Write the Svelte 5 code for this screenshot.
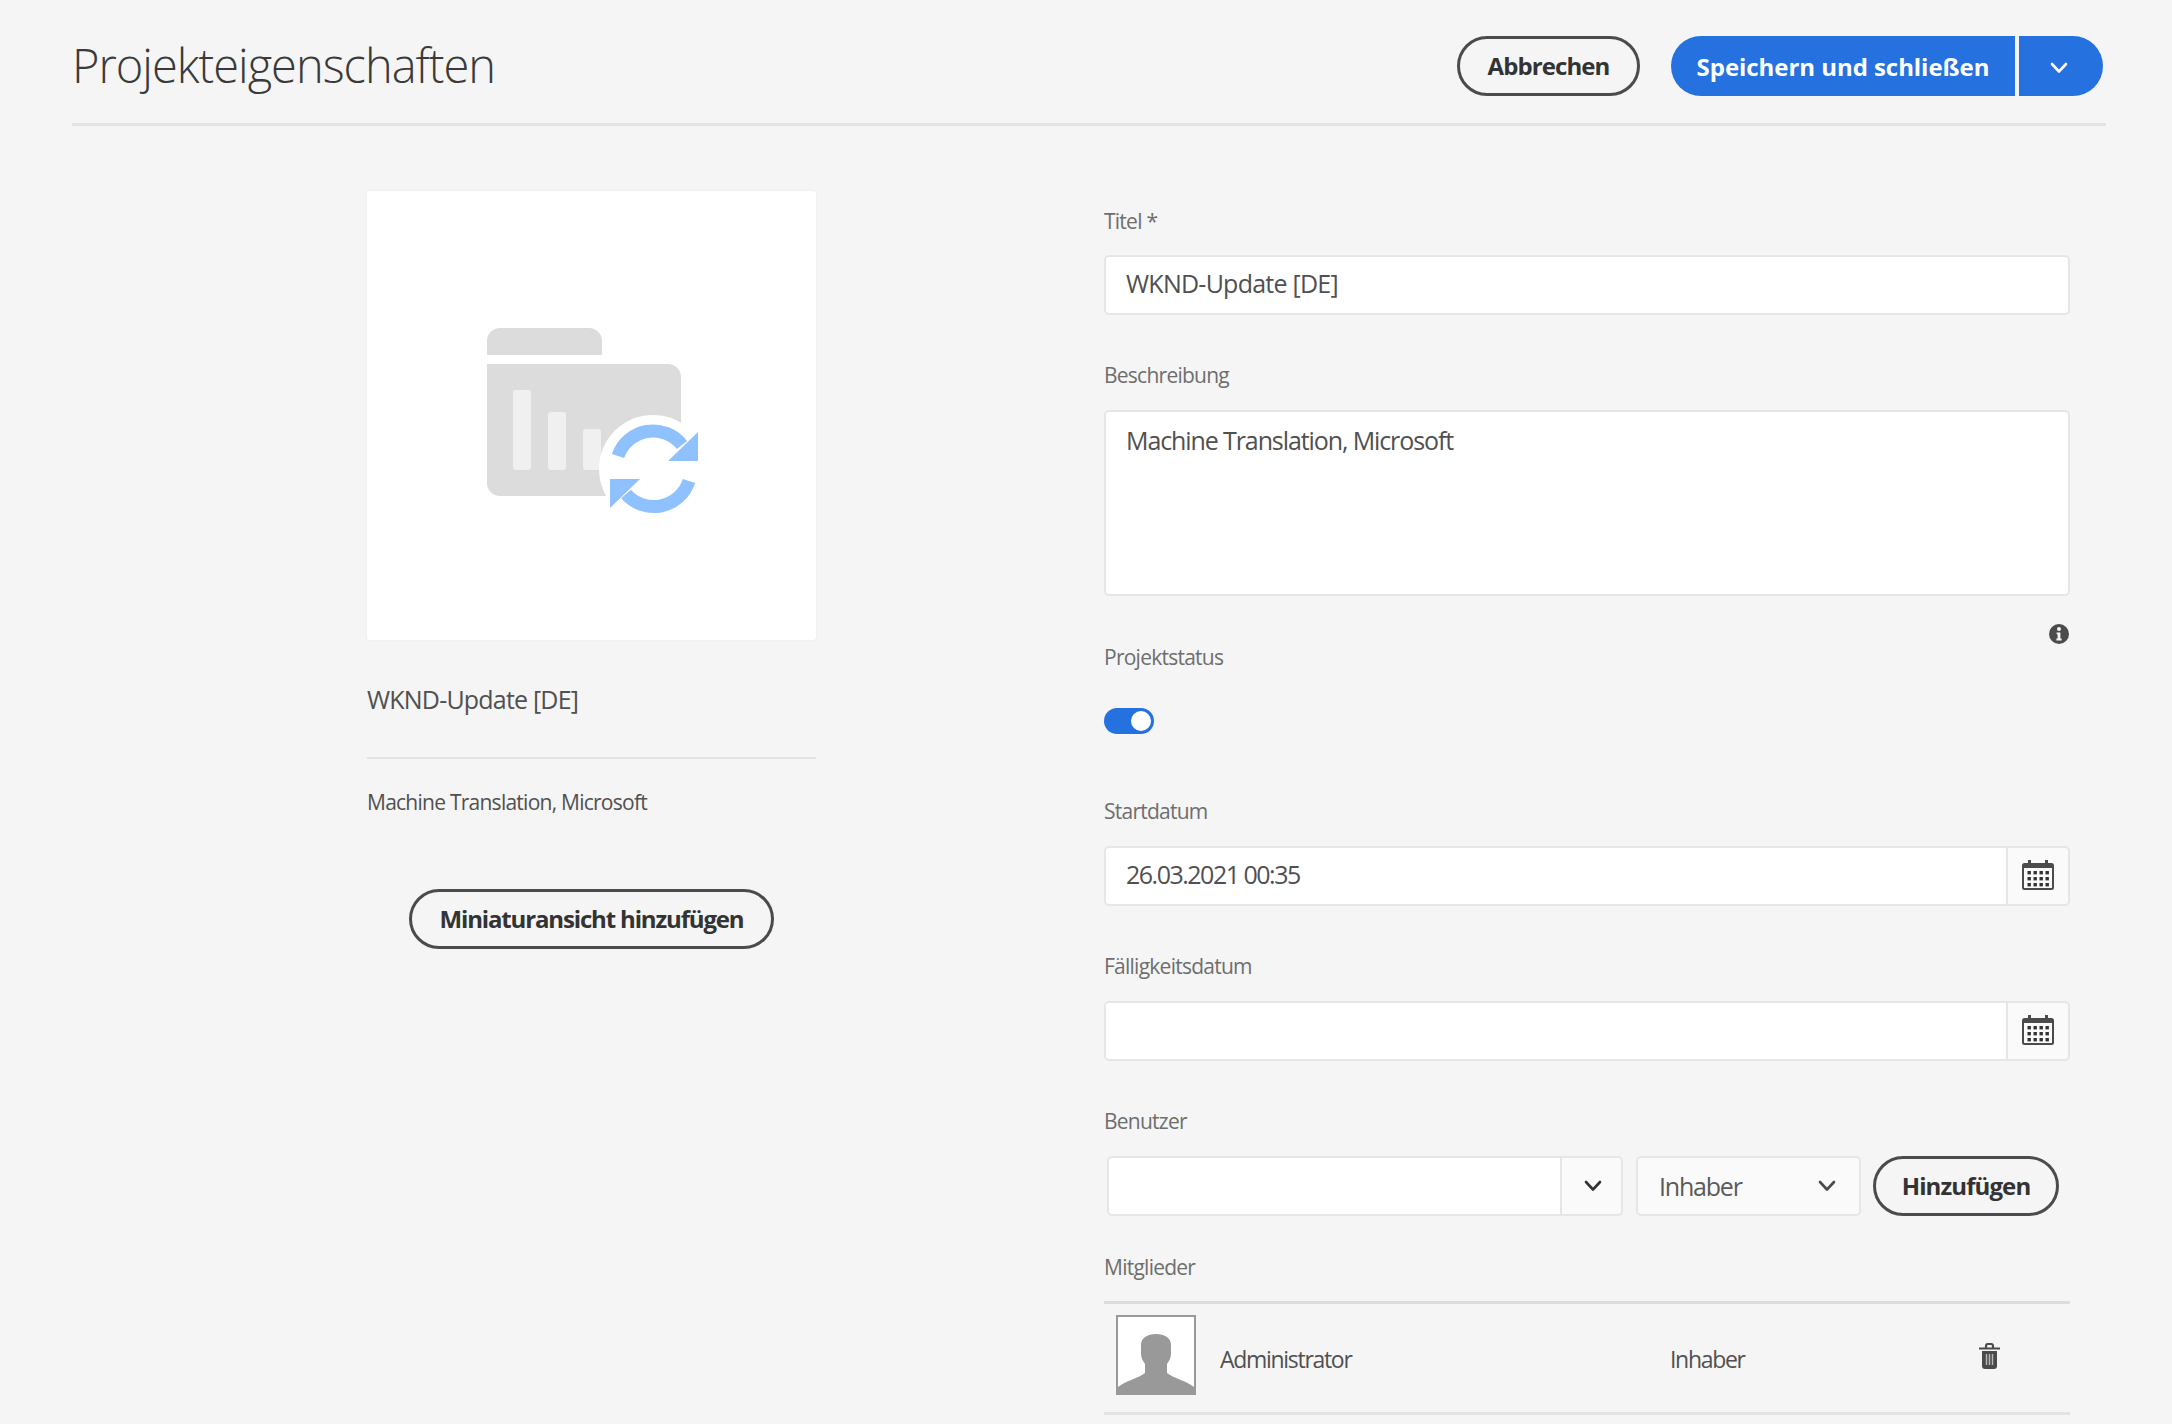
<script>
	let title = 'WKND-Update [DE]';
	let description = 'Machine Translation, Microsoft';
	let startDate = '26.03.2021 00:35';
</script>

{#snippet calendar()}
	<svg class="cal" viewBox="0 0 32 30" aria-hidden="true">
		<rect x="1" y="4" width="30" height="25" rx="1.5" fill="none" stroke="#4b4b4b" stroke-width="2" />
		<rect x="6" y="0" width="3" height="7" fill="#4b4b4b" />
		<rect x="23" y="0" width="3" height="7" fill="#4b4b4b" />
		<rect x="1" y="5" width="30" height="3" fill="#4b4b4b" />
		{#each [11, 17, 23] as y}
			{#each [6, 12, 18, 24] as x}
				<rect x={x - 0.5} {y} width="3.4" height="3.4" fill="#333" />
			{/each}
		{/each}
	</svg>
{/snippet}

{#snippet chevron(color)}
	<svg class="chev" viewBox="0 0 18 12" aria-hidden="true">
		<path d="M2 2l7 7.5L16 2" fill="none" stroke={color} stroke-width="2.6" stroke-linecap="round" stroke-linejoin="round" />
	</svg>
{/snippet}

<div class="page">
	<header class="top">
		<h1>Projekteigenschaften</h1>
		<div class="actions">
			<button class="btn outline cancel">Abbrechen</button>
			<div class="split">
				<button class="btn primary save">Speichern und schließen</button>
				<button class="btn primary more" aria-label="Mehr">{@render chevron('#fff')}</button>
			</div>
		</div>
	</header>

	<main class="columns">
		<section class="preview">
			<div class="thumb">
				<svg viewBox="367 190 449 449" aria-hidden="true">
					<path d="M487 354v-14a13 13 0 0 1 13-13h89a13 13 0 0 1 13 13v14z" fill="#dcdcdc" />
					<path d="M487 363h181a13 13 0 0 1 13 13v106a13 13 0 0 1-13 13H500a13 13 0 0 1-13-13z" fill="#dcdcdc" />
					<rect x="513" y="389" width="18" height="80" rx="3" fill="#f0f0f0" />
					<rect x="548" y="411" width="18" height="58" rx="3" fill="#f0f0f0" />
					<rect x="583" y="428" width="18" height="41" rx="3" fill="#f0f0f0" />
					<circle cx="653" cy="468" r="54" fill="#fff" />
					<path d="M618 455a37 37 0 0 1 64-11" fill="none" stroke="#90c1ff" stroke-width="13" />
					<path d="M698 431v29h-30z" fill="#90c1ff" />
					<path d="M689 480a37 37 0 0 1-63 13" fill="none" stroke="#90c1ff" stroke-width="13" />
					<path d="M610 478h30l-30 29z" fill="#90c1ff" />
				</svg>
			</div>
			<p class="thumb-title">{title}</p>
			<hr />
			<p class="thumb-desc">{description}</p>
			<div class="thumb-action">
				<button class="btn outline add-thumb">Miniaturansicht hinzufügen</button>
			</div>
		</section>

		<form class="form">
			<label class="lbl first" for="title">Titel *</label>
			<input id="title" class="field" value={title} />

			<label class="lbl sp" for="desc">Beschreibung</label>
			<textarea id="desc" class="field area" value={description}></textarea>

			<div class="info-row">
				<svg viewBox="0 0 20 20" aria-hidden="true">
					<circle cx="10" cy="10" r="10" fill="#4b4b4b" />
					<circle cx="10" cy="5" r="2" fill="#f5f5f5" />
					<path d="M7.6 8.4h3.8v6.2h1.2v1.8H7.4v-1.8h1.2v-4.4h-1z" fill="#f5f5f5" />
				</svg>
			</div>
			<span class="lbl status">Projektstatus</span>
			<div class="toggle"><span></span></div>

			<label class="lbl start" for="start">Startdatum</label>
			<div class="group">
				<input id="start" class="field date" value={startDate} />
				<button type="button" class="addon" aria-label="Kalender">{@render calendar()}</button>
			</div>

			<label class="lbl sp" for="due">Fälligkeitsdatum</label>
			<div class="group">
				<input id="due" class="field" />
				<button type="button" class="addon" aria-label="Kalender">{@render calendar()}</button>
			</div>

			<label class="lbl sp" for="user">Benutzer</label>
			<div class="user-row">
				<div class="group combo">
					<input id="user" class="field" />
					<button type="button" class="addon narrow" aria-label="Benutzer öffnen">{@render chevron('#333')}</button>
				</div>
				<div class="select">
					<span>Inhaber</span>
					{@render chevron('#4b4b4b')}
				</div>
				<button type="button" class="btn outline add-user">Hinzufügen</button>
			</div>

			<span class="lbl members">Mitglieder</span>
			<div class="member">
				<div class="avatar">
					<svg viewBox="0 0 76 76" aria-hidden="true">
						<path d="M38 17c-9 0-15 4-15 11v9c0 4 2 7 4 10v9c-6 5-20 8-27 14v6h76v-6c-7-6-21-9-27-14v-9c2-3 4-6 4-10v-9c0-7-6-11-15-11z" fill="#999" />
					</svg>
				</div>
				<span class="name">Administrator</span>
				<span class="role">Inhaber</span>
				<svg class="trash" viewBox="0 0 21 26" aria-hidden="true">
					<path d="M0 5.5h21M7 5V3a2 2 0 0 1 2-2h3a2 2 0 0 1 2 2v2" fill="none" stroke="#4b4b4b" stroke-width="2.2" />
					<path d="M3 8h15v15a3 3 0 0 1-3 3H6a3 3 0 0 1-3-3z" fill="#4b4b4b" />
					<path d="M7.5 11v11M10.5 11v11M13.5 11v11" stroke="#b9b9b9" stroke-width="1.4" />
				</svg>
			</div>
		</form>
	</main>
</div>

<style>
	:global(body) {
		background: #f5f5f5;
		font-family: 'Open Sans', sans-serif;
		color: #505050;
	}

	.page {
		width: 2172px;
		height: 1424px;
		overflow: hidden;
		box-sizing: border-box;
		padding: 36px 66px 0 72px;
	}

	.top {
		display: flex;
		justify-content: space-between;
		align-items: flex-start;
		height: 87px;
		border-bottom: 3px solid #e3e3e3;
	}

	h1 {
		margin: 0;
		font-family: 'Open Sans', sans-serif;
		font-weight: 300;
		font-size: 47px;
		line-height: 58px;
		letter-spacing: -1px;
		color: #3a3a3a;
	}

	.actions {
		display: flex;
		gap: 31px;
		padding-right: 3px;
	}

	.btn {
		height: 60px;
		box-sizing: border-box;
		border-radius: 30px;
		font-family: 'Open Sans', sans-serif;
		font-weight: 700;
		font-size: 24px;
		letter-spacing: -0.9px;
		padding: 0;
	}

	.outline {
		background: transparent;
		border: 3px solid #4b4b4b;
		color: #333;
		padding-bottom: 2px;
	}

	.cancel {
		width: 183px;
	}

	.split {
		display: flex;
		gap: 4px;
	}

	.primary {
		background: #2671e0;
		border: none;
		color: #fff;
	}

	.save {
		width: 344px;
		border-radius: 30px 0 0 30px;
		letter-spacing: -0.05px;
	}

	.more {
		width: 84px;
		border-radius: 0 30px 30px 0;
		padding-right: 4px;
		padding-bottom: 4px;
	}

	.chev {
		width: 18px;
		height: 12px;
	}

	.columns {
		display: grid;
		grid-template-columns: 449px 966px;
		column-gap: 288px;
		padding-left: 295px;
	}

	.thumb {
		width: 449px;
		height: 449px;
		margin-top: 65px;
		background: #fff;
		border-radius: 3px;
		box-shadow: 0 0 2px #e9e9e9;
	}

	.thumb svg {
		display: block;
		width: 449px;
		height: 449px;
	}

	.thumb-title {
		margin: 42px 0 0;
		font-size: 25px;
		line-height: 34px;
		letter-spacing: -0.8px;
	}

	hr {
		margin: 41px 0 0;
		border: none;
		border-top: 2px solid #e3e3e3;
	}

	.thumb-desc {
		margin: 30px 0 0;
		font-size: 21px;
		line-height: 26px;
		letter-spacing: -0.75px;
	}

	.thumb-action {
		display: flex;
		justify-content: center;
		margin-top: 74px;
	}

	.add-thumb {
		width: 365px;
		letter-spacing: -1.15px;
	}

	.form {
		padding-top: 80px;
	}

	.lbl {
		display: block;
		height: 30px;
		line-height: 30px;
		font-size: 21px;
		letter-spacing: -0.75px;
		color: #6e6e6e;
		margin-bottom: 20px;
	}

	.lbl.first {
		margin-bottom: 19px;
	}

	.lbl.sp {
		margin-top: 45px;
	}

	.field {
		display: block;
		width: 100%;
		height: 60px;
		box-sizing: border-box;
		padding: 0 20px 4px;
		background: #fff;
		border: 2px solid #e6e6e6;
		border-radius: 5px;
		outline: none;
		font-family: 'Open Sans', sans-serif;
		font-size: 25px;
		letter-spacing: -0.75px;
		color: #505050;
	}

	.area {
		height: 186px;
		padding-top: 11px;
		line-height: 34px;
		letter-spacing: -1.1px;
		resize: none;
		overflow: hidden;
	}

	.date {
		letter-spacing: -1.5px;
	}

	.info-row {
		display: flex;
		justify-content: flex-end;
		height: 20px;
		margin-top: 28px;
		padding-right: 1px;
	}

	.info-row svg {
		width: 20px;
		height: 20px;
	}

	.status {
		margin-top: -2px;
		margin-bottom: 36px;
	}

	.toggle {
		width: 50px;
		height: 26px;
		box-sizing: border-box;
		padding: 3px;
		display: flex;
		justify-content: flex-end;
		background: #2671e0;
		border-radius: 13px;
	}

	.toggle span {
		width: 20px;
		height: 20px;
		background: #fff;
		border-radius: 50%;
	}

	.start {
		margin-top: 62px;
	}

	.group {
		display: flex;
	}

	.group .field {
		flex: 1;
		min-width: 0;
		border-radius: 5px 0 0 5px;
	}

	.addon {
		width: 62px;
		height: 60px;
		flex: none;
		display: flex;
		align-items: center;
		justify-content: center;
		box-sizing: border-box;
		padding: 0 0 2px;
		background: #fafafa;
		border: 2px solid #e6e6e6;
		border-left: none;
		border-radius: 0 5px 5px 0;
	}

	.addon.narrow {
		width: 61px;
		padding: 0 0 0 2px;
	}

	.cal {
		width: 32px;
		height: 30px;
	}

	.user-row {
		display: flex;
		align-items: center;
		padding-left: 3px;
	}

	.combo {
		width: 516px;
	}

	.select {
		display: flex;
		align-items: center;
		justify-content: space-between;
		width: 225px;
		height: 60px;
		box-sizing: border-box;
		margin-left: 13px;
		padding: 0 23px 0 21px;
		background: #fafafa;
		border: 2px solid #e6e6e6;
		border-radius: 5px;
		font-size: 25px;
		letter-spacing: -1.2px;
		color: #5a5a5a;
	}

	.add-user {
		width: 186px;
		margin-left: 12px;
	}

	.members {
		margin-top: 36px;
		margin-bottom: 19px;
	}

	.member {
		display: flex;
		align-items: center;
		height: 108px;
		border-top: 3px solid #dcdcdc;
		border-bottom: 3px solid #e3e3e3;
	}

	.avatar {
		width: 80px;
		height: 80px;
		box-sizing: border-box;
		margin: 0 0 6px 12px;
		background: #fff;
		border: 2px solid #999;
	}

	.avatar svg {
		display: block;
		width: 76px;
		height: 76px;
	}

	.name,
	.role {
		font-size: 23px;
		letter-spacing: -1.3px;
		color: #505050;
		padding-top: 2px;
	}

	.name {
		width: 450px;
		margin-left: 24px;
	}

	.role {
		width: 309px;
	}

	.trash {
		width: 21px;
		height: 26px;
		margin-bottom: 4px;
	}
</style>
